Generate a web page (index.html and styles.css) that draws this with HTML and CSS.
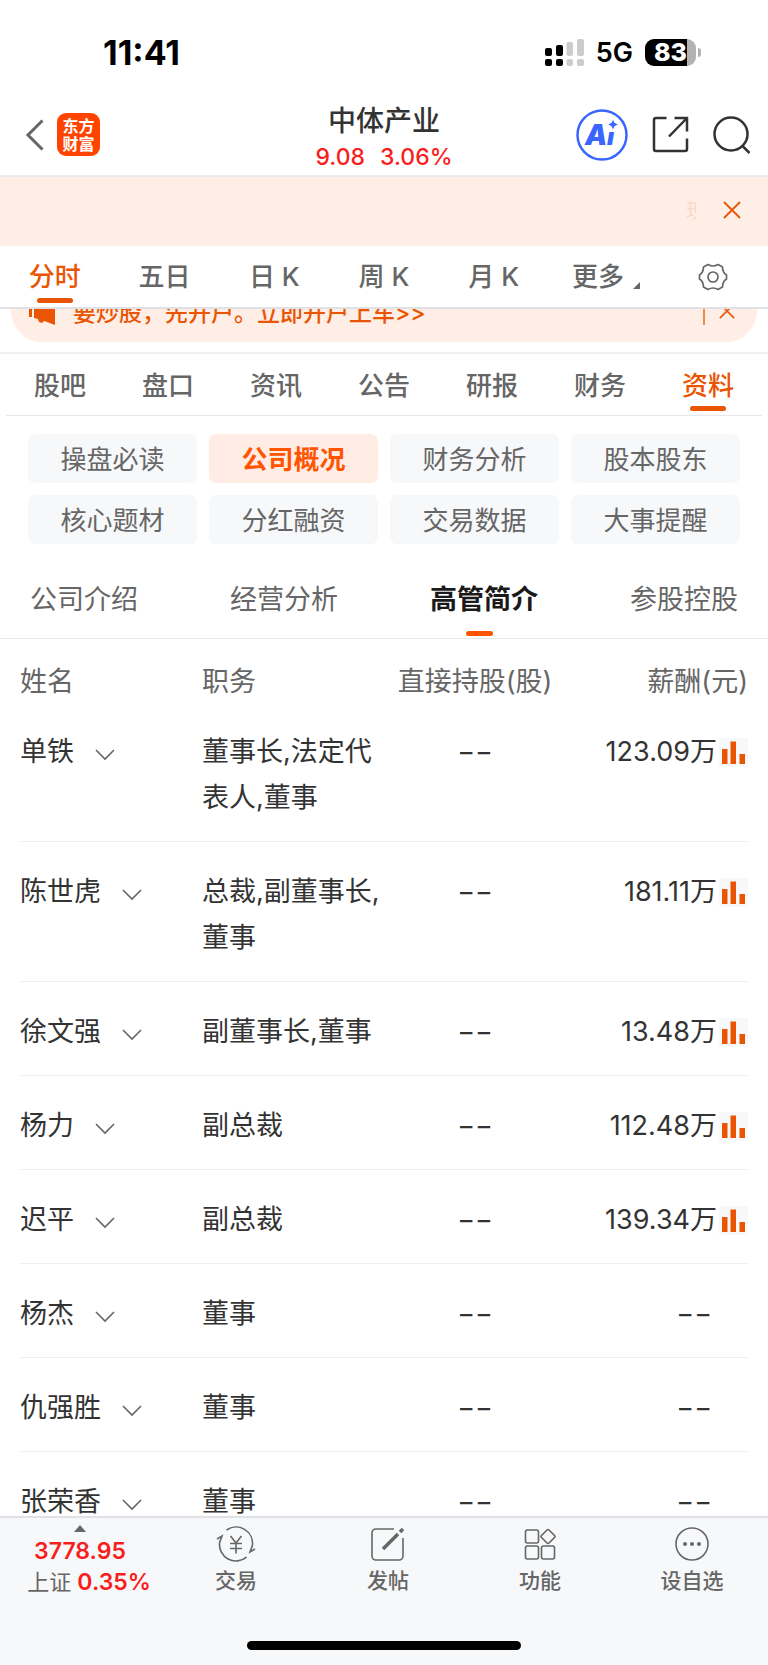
FILE: index.html
```
<!DOCTYPE html>
<html lang="zh-CN">
<head>
  <meta charset="utf-8">
  <meta name="viewport" content="width=device-width, initial-scale=1">
  <title>中体产业 - 高管简介</title>
  <link rel="stylesheet" href="styles.css">
</head>
<body>
  <!-- shared icons -->
  <svg class="sprite" aria-hidden="true">
    <symbol id="icon-down" viewBox="0 0 20 12">
      <path d="M1 1l9 9 9-9" fill="none" stroke="#666" stroke-width="1.6"/>
    </symbol>
    <symbol id="icon-close" viewBox="0 0 18 18">
      <path d="M1 1l16 16M17 1L1 17" fill="none" stroke="#ea5504" stroke-width="1.8"/>
    </symbol>
    <symbol id="icon-bars" viewBox="0 0 29 29">
      <rect width="29" height="29" rx="2" fill="#f7f8fa"/>
      <path d="M3 11h5.500v15H3zM11.500 3.500H17V26h-5.500zM20.500 16H26v10h-5.500z" fill="#ea5504"/>
    </symbol>
  </svg>

  <div class="app">
    <div class="status-bar">
      <span class="time">11:41</span>
      <div class="status-right">
        <svg width="39" height="27" viewBox="0 0 39 27">
          <g fill="#000">
            <rect x="0" y="9" width="7" height="8" rx="2"/>
            <rect x="0" y="20" width="7" height="7" rx="2"/>
            <rect x="11" y="6" width="7" height="11" rx="2"/>
            <rect x="11" y="20" width="7" height="7" rx="2"/>
          </g>
          <g fill="#ccc">
            <rect x="21.500" y="3" width="6.500" height="14" rx="2"/>
            <rect x="21.500" y="20" width="6.500" height="7" rx="2"/>
            <rect x="32" y="0" width="7" height="17" rx="2"/>
            <rect x="32" y="20" width="7" height="7" rx="2"/>
          </g>
        </svg>
        <span class="network">5G</span>
        <div class="battery"><span class="battery-level">83</span></div>
      </div>
    </div>

    <header class="header">
      <div class="header-left">
        <button class="icon-btn" aria-label="返回">
          <svg width="20" height="32" viewBox="0 0 20 32"><path d="M17.500 1.500L3 16l14.500 14.500" fill="none" stroke="#666" stroke-width="3"/></svg>
        </button>
        <a class="logo" href="#">东方<br>财富</a>
      </div>
      <div class="stock">
        <h1>中体产业</h1>
        <p><span>9.08</span><span>3.06%</span></p>
      </div>
      <div class="header-right">
        <button class="icon-btn" aria-label="AI">
          <svg width="52" height="52" viewBox="0 0 52 52">
            <circle cx="26" cy="26" r="24.500" fill="none" stroke="#3a66ff" stroke-width="2.500"/>
            <text class="ai-a" x="9" y="36">A</text>
            <text class="ai-i" x="31" y="36">ı</text>
            <path d="M37 12.500l1 2 2 1-2 1-1 2-1-2-2-1 2-1z" fill="#3a66ff" stroke="#3a66ff" stroke-width="1.500"/>
          </svg>
        </button>
        <button class="icon-btn" aria-label="分享">
          <svg width="37" height="37" viewBox="0 0 37 37" fill="none" stroke="#333" stroke-width="2.500">
            <path d="M14.500 2H4a2 2 0 0 0-2 2v29a2 2 0 0 0 2 2h29a2 2 0 0 0 2-2V22.500M22.500 2H35v13.500M35 2L17 20.500"/>
          </svg>
        </button>
        <button class="icon-btn" aria-label="搜索">
          <svg width="38" height="38" viewBox="0 0 38 38" fill="none" stroke="#333" stroke-width="2.500">
            <circle cx="18" cy="18" r="16.500"/><path d="M29.500 30l7 7"/>
          </svg>
        </button>
      </div>
    </header>

    <div class="notice">
      <span class="marquee">现</span>
      <button class="icon-btn" aria-label="关闭公告"><svg width="18" height="18"><use href="#icon-close"/></svg></button>
    </div>

    <nav class="period-tabs">
      <a class="active" href="#">分时</a>
      <a href="#">五日</a>
      <a href="#">日 K</a>
      <a href="#">周 K</a>
      <a href="#">月 K</a>
      <a class="more" href="#">更多<svg width="7" height="7" viewBox="0 0 7 7"><path d="M7 0v7H0z" fill="#666"/></svg></a>
      <button class="icon-btn" aria-label="设置">
        <svg width="30" height="28" viewBox="0 0 30 28" fill="none" stroke="#666" stroke-width="1.700">
          <path d="M10 1.500Q15 4.500 20 1.500L24.500 4Q24.500 9.500 28.500 12V16Q24.500 18.500 24.500 24L20 26.500Q15 23.500 10 26.500L5.500 24Q5.500 18.500 1.500 16V12Q5.500 9.500 5.500 4Z" stroke-linejoin="round"/>
          <circle cx="15" cy="14" r="5"/>
        </svg>
      </button>
    </nav>

    <main class="content">
      <div class="promo-wrap">
        <div class="promo">
          <svg width="28" height="28" viewBox="0 0 28 28" fill="#ea5504">
            <path d="M1 8h3v12H1zM6 6l21-5v27l-8-3-3-1-2 2-3-1-1-3-4-1z"/>
          </svg>
          <a href="#">要炒股，先开户。立即开户上车&gt;&gt;</a>
          <button class="icon-btn" aria-label="关闭广告"><svg width="16" height="16"><use href="#icon-close"/></svg></button>
        </div>
      </div>

      <nav class="main-tabs">
        <a href="#">股吧</a>
        <a href="#">盘口</a>
        <a href="#">资讯</a>
        <a href="#">公告</a>
        <a href="#">研报</a>
        <a href="#">财务</a>
        <a class="active" href="#">资料</a>
      </nav>

      <div class="chips">
        <button>操盘必读</button>
        <button class="active">公司概况</button>
        <button>财务分析</button>
        <button>股本股东</button>
        <button>核心题材</button>
        <button>分红融资</button>
        <button>交易数据</button>
        <button>大事提醒</button>
      </div>

      <nav class="sub-tabs">
        <a href="#">公司介绍</a>
        <a href="#">经营分析</a>
        <a class="active" href="#">高管简介</a>
        <a href="#">参股控股</a>
      </nav>

      <table class="managers">
        <thead>
          <tr><th>姓名</th><th>职务</th><th>直接持股(股)</th><th>薪酬(元)</th></tr>
        </thead>
        <tbody>
          <tr>
            <td><button class="name">单铁<svg width="20" height="12"><use href="#icon-down"/></svg></button></td>
            <td>董事长,法定代表人,董事</td><td>−−</td>
            <td><div class="pay">123.09万<svg width="29" height="29"><use href="#icon-bars"/></svg></div></td>
          </tr>
          <tr>
            <td><button class="name">陈世虎<svg width="20" height="12"><use href="#icon-down"/></svg></button></td>
            <td>总裁,副董事长,董事</td><td>−−</td>
            <td><div class="pay">181.11万<svg width="29" height="29"><use href="#icon-bars"/></svg></div></td>
          </tr>
          <tr>
            <td><button class="name">徐文强<svg width="20" height="12"><use href="#icon-down"/></svg></button></td>
            <td>副董事长,董事</td><td>−−</td>
            <td><div class="pay">13.48万<svg width="29" height="29"><use href="#icon-bars"/></svg></div></td>
          </tr>
          <tr>
            <td><button class="name">杨力<svg width="20" height="12"><use href="#icon-down"/></svg></button></td>
            <td>副总裁</td><td>−−</td>
            <td><div class="pay">112.48万<svg width="29" height="29"><use href="#icon-bars"/></svg></div></td>
          </tr>
          <tr>
            <td><button class="name">迟平<svg width="20" height="12"><use href="#icon-down"/></svg></button></td>
            <td>副总裁</td><td>−−</td>
            <td><div class="pay">139.34万<svg width="29" height="29"><use href="#icon-bars"/></svg></div></td>
          </tr>
          <tr>
            <td><button class="name">杨杰<svg width="20" height="12"><use href="#icon-down"/></svg></button></td>
            <td>董事</td><td>−−</td><td class="empty">−−</td>
          </tr>
          <tr>
            <td><button class="name">仇强胜<svg width="20" height="12"><use href="#icon-down"/></svg></button></td>
            <td>董事</td><td>−−</td><td class="empty">−−</td>
          </tr>
          <tr>
            <td><button class="name">张荣香<svg width="20" height="12"><use href="#icon-down"/></svg></button></td>
            <td>董事</td><td>−−</td><td class="empty">−−</td>
          </tr>
        </tbody>
      </table>
    </main>

    <footer class="footer">
      <nav class="bottom-nav">
        <a class="index" href="#">
          <svg width="12" height="7" viewBox="0 0 12 7"><path d="M6 0l6 7H0z" fill="#666"/></svg>
          <strong>3778.95</strong>
          <span>上证 <strong>0.35%</strong></span>
        </a>
        <a href="#">
          <svg width="40" height="36" viewBox="0 0 40 36" fill="none" stroke="#666" stroke-width="1.600">
            <path d="M10.500 4A16.500 16.500 0 0 1 36.400 19.500L34 26l5-3M30.600 31.100A16.500 16.500 0 0 1 3.600 16.500L6 10l-5 3"/>
            <path d="M14.500 10l5.500 7 5.500-7M20 17v10.500M14 17.500h12M14 22.500h12"/>
          </svg>
          交易
        </a>
        <a href="#">
          <svg width="36" height="36" viewBox="0 0 36 36" fill="none" stroke="#666" stroke-width="1.600">
            <path d="M24 3H6a4 4 0 0 0-4 4v23a4 4 0 0 0 4 4h23a4 4 0 0 0 4-4V12"/>
            <path d="M13 23L28 8M30 6l3-3" stroke-width="3.500"/>
          </svg>
          发帖
        </a>
        <a href="#">
          <svg width="32" height="36" viewBox="0 0 32 36" fill="none" stroke="#666" stroke-width="1.600">
            <rect x="1.500" y="4" width="13" height="13" rx="2"/>
            <rect x="1.500" y="20" width="13" height="13" rx="2"/>
            <rect x="17.500" y="20" width="13" height="13" rx="2"/>
            <path d="M23 4l-5.500 5.500q-1 1 0 2L23 17q1 1 2 0l5.500-5.500q1-1 0-2L25 4q-1-1-2 0z"/>
          </svg>
          功能
        </a>
        <a href="#">
          <svg width="36" height="36" viewBox="0 0 36 36">
            <circle cx="18" cy="18" r="16" fill="none" stroke="#666" stroke-width="1.600"/>
            <g fill="#666"><circle cx="11" cy="18" r="2"/><circle cx="18" cy="18" r="2"/><circle cx="25" cy="18" r="2"/></g>
          </svg>
          设自选
        </a>
      </nav>
      <div class="home-bar"></div>
    </footer>
  </div>
</body>
</html>
```
FILE: styles.css
```
* {
  box-sizing: border-box;
}

body {
  margin: 0;
  font-family: Inter, "Noto Sans CJK SC", sans-serif;
  font-size: 27px;
  color: #333;
  background: #fff;
}

a {
  color: inherit;
  text-decoration: none;
}

button {
  font: inherit;
  color: inherit;
  border: none;
  padding: 0;
  background: none;
  cursor: pointer;
}

svg {
  display: block;
  flex: none;
}

.sprite {
  display: none;
}

.icon-btn {
  display: flex;
  align-items: center;
  justify-content: center;
}

.app {
  display: flex;
  flex-direction: column;
  height: 100vh;
  overflow: hidden;
}

/* status bar */
.status-bar {
  flex: none;
  display: flex;
  justify-content: space-between;
  align-items: center;
  height: 94px;
  padding: 10px 72px 0 103px;
  color: #000;
}

.time {
  font-size: 34px;
  font-weight: 700;
}

.status-right {
  display: flex;
  align-items: center;
}

.network {
  margin: 0 12px;
  font-size: 27px;
  font-weight: 600;
}

.battery {
  position: relative;
  width: 51px;
  height: 27px;
  border-radius: 9px;
  background: linear-gradient(to right, #000 83%, #b3b3b3 83%);
  text-align: center;
}

.battery::after {
  content: "";
  position: absolute;
  left: 53px;
  top: 9px;
  width: 3px;
  height: 9px;
  border-radius: 0 4px 4px 0;
  background: #b3b3b3;
}

.battery-level {
  display: block;
  color: #fff;
  font-size: 25px;
  font-weight: 800;
  line-height: 27px;
}

/* header */
.header {
  flex: none;
  display: grid;
  grid-template-columns: 1fr auto 1fr;
  align-items: center;
  height: 83px;
  padding: 0 17px;
  border-bottom: 2px solid #ebebeb;
}

.header-left,
.header-right {
  display: flex;
  align-items: center;
}

.header-left {
  gap: 12px;
  padding-left: 8px;
}

.header-right {
  justify-content: flex-end;
  gap: 24px;
}

.logo {
  width: 43px;
  height: 43px;
  padding-top: 4px;
  border-radius: 9px;
  background: #ff4400;
  color: #fff;
  font-size: 16px;
  font-weight: 700;
  line-height: 18px;
  text-align: center;
}

.stock {
  padding-top: 5px;
  text-align: center;
}

.stock h1 {
  margin: 0;
  font-size: 28px;
  font-weight: 500;
  line-height: 40px;
}

.stock p {
  display: flex;
  justify-content: center;
  gap: 15px;
  margin: 0;
  color: #f81e1e;
  font-size: 23px;
  font-weight: 500;
  line-height: 32px;
}

.ai-a,
.ai-i {
  fill: #3a66ff;
  font-size: 28px;
  font-weight: 900;
  font-style: italic;
}

.ai-i {
  font-size: 24px;
}

/* notice */
.notice {
  flex: none;
  display: flex;
  justify-content: flex-end;
  align-items: center;
  gap: 27px;
  height: 69px;
  padding: 0 27px 4px 0;
  background: #feeee6;
}

.marquee {
  width: 10px;
  overflow: hidden;
  color: #ea5504;
  font-size: 20px;
  opacity: 0.15;
}

/* chart periods */
.period-tabs {
  flex: none;
  display: grid;
  grid-template-columns: repeat(7, 1fr);
  height: 63px;
  border-bottom: 2px solid #e0e1e5;
  color: #666;
  font-size: 26px;
  font-weight: 500;
  line-height: 61px;
  text-align: center;
}

.period-tabs a,
.main-tabs a,
.sub-tabs a {
  position: relative;
}

.period-tabs .active,
.main-tabs .active {
  color: #ea5504;
}

.period-tabs .active::after,
.main-tabs .active::after,
.sub-tabs .active::after {
  content: "";
  position: absolute;
  left: 50%;
  bottom: 4px;
  width: 36px;
  height: 5px;
  margin-left: -18px;
  border-radius: 3px;
  background: #ea5504;
}

.period-tabs .more {
  display: flex;
  justify-content: center;
  align-items: center;
  gap: 9px;
  padding-left: 5px;
}

.more svg {
  margin-top: 18px;
}

/* promo strip, scrolled half under the period tabs */
.content {
  flex: 1;
  min-height: 0;
  overflow: hidden;
}

.promo-wrap {
  display: flex;
  align-items: flex-end;
  height: 45px;
  padding: 0 11px 10px;
  border-bottom: 2px solid #f0f0f0;
  overflow: hidden;
}

.promo {
  flex: 1;
  display: flex;
  align-items: center;
  gap: 17px;
  height: 62px;
  padding: 0 22px 0 17px;
  border-radius: 31px;
  background: #feeee6;
  color: #ea5504;
  font-size: 23px;
  font-weight: 500;
}

.promo .icon-btn {
  height: 28px;
  margin-left: auto;
  padding-left: 14px;
  border-left: 2px solid #f08a50;
}

/* section tabs */
.main-tabs {
  display: grid;
  grid-template-columns: repeat(7, 1fr);
  margin: 0 6px;
  padding-top: 2px;
  border-bottom: 1px solid #e8e8e8;
  color: #666;
  font-size: 26px;
  font-weight: 500;
  line-height: 59px;
  text-align: center;
}

.chips {
  display: grid;
  grid-template-columns: repeat(4, 1fr);
  gap: 12px;
  padding: 18px 28px;
}

.chips button {
  height: 49px;
  padding-bottom: 3px;
  border-radius: 7px;
  background: #f7f8fa;
  color: #666;
  font-size: 26px;
}

.chips .active {
  background: #ffece4;
  color: #ff5500;
  font-weight: 700;
}

.sub-tabs {
  display: flex;
  justify-content: space-between;
  padding: 0 30px;
  border-bottom: 1px solid #ebebeb;
  color: #666;
  line-height: 76px;
}

.sub-tabs .active {
  color: #1a1a1a;
  font-weight: 700;
}

.sub-tabs .active::after {
  bottom: 2px;
  width: 27px;
  background: #ff5500;
}

/* managers table */
.managers {
  width: calc(100% - 40px);
  margin: 0 20px;
  table-layout: fixed;
  border-collapse: collapse;
  line-height: 46px;
}

.managers th {
  padding: 22px 0 0;
  color: #666;
  font-weight: 400;
  line-height: 41px;
  text-align: left;
}

.managers td {
  padding: 27px 0 20px;
  border-bottom: 1px solid #f0f0f0;
  vertical-align: top;
}

.managers th:nth-child(3),
.managers td:nth-child(3) {
  text-align: center;
}

.managers th:nth-child(4),
.managers td:nth-child(4) {
  text-align: right;
}

.managers .empty {
  padding-right: 36px;
}

.name {
  display: flex;
  align-items: center;
  gap: 21px;
  line-height: 46px;
}

.name svg {
  margin-top: 5px;
}

.pay {
  display: flex;
  align-items: center;
  justify-content: flex-end;
  gap: 2px;
}

/* bottom bar */
.footer {
  flex: none;
  height: 149px;
  border-top: 2px solid #e0e1e7;
  background: #f7f8fa;
}

.bottom-nav {
  display: grid;
  grid-template-columns: 160px repeat(4, 1fr);
  height: 123px;
}

.bottom-nav a {
  display: flex;
  flex-direction: column;
  align-items: center;
  padding-top: 8px;
  color: #666;
  font-size: 21px;
  font-weight: 500;
  line-height: 38px;
}

.bottom-nav .index {
  padding-top: 7px;
  font-size: 22px;
  font-weight: 400;
  line-height: 31px;
}

.bottom-nav .index svg {
  margin-bottom: 4px;
}

.index span {
  padding-left: 18px;
}

.index strong {
  color: #f81e1e;
  font-size: 23px;
  font-weight: 600;
}

.home-bar {
  width: 274px;
  height: 9px;
  margin: 0 auto;
  border-radius: 5px;
  background: #000;
}
```
